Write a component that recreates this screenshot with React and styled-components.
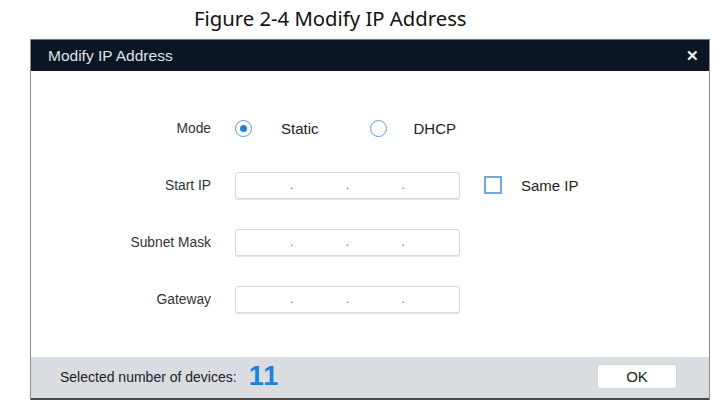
import React from 'react';
import styled, { createGlobalStyle } from 'styled-components';

const GlobalStyle = createGlobalStyle`
  html, body {
    margin: 0;
    padding: 0;
    background: #ffffff;
  }
  body {
    font-family: 'Liberation Sans', Arial, sans-serif;
  }
`;

const Page = styled.div`
  width: 715px;
  height: 401px;
  overflow: hidden;
  background: #ffffff;
`;

const Caption = styled.div`
  height: 39px;
  padding-left: 194px;
  box-sizing: border-box;
  font-family: 'Noto Sans', 'Open Sans', sans-serif;
  font-size: 20.3px;
  line-height: 37px;
  color: #111;
`;

const Dialog = styled.div`
  margin-left: 30px;
  width: 680px;
  border-left: 1px solid #8c8c8c;
  border-right: 1px solid #8c8c8c;
  box-sizing: border-box;
  display: flex;
  flex-direction: column;
`;

const Header = styled.div`
  height: 32px;
  background: #0b1623;
  border-top: 1px solid #6f7780;
  box-sizing: border-box;
  display: flex;
  align-items: center;
  justify-content: space-between;
  padding: 0 10px 0 17px;
  color: #dfe3e8;
  font-size: 15.5px;
`;

const CloseButton = styled.span`
  color: #f4f6f8;
  font-size: 15px;
  font-weight: bold;
  line-height: 1;
`;

const Body = styled.div`
  height: 286px;
  padding-top: 43px;
  box-sizing: border-box;
  display: grid;
  grid-template-columns: 180px auto;
  grid-auto-rows: 28px;
  column-gap: 24px;
  row-gap: 29px;
  align-content: start;
`;

const Label = styled.div`
  display: flex;
  align-items: center;
  justify-content: flex-end;
  font-size: 13.8px;
  color: #333;
`;

const Controls = styled.div`
  display: flex;
  align-items: center;
`;

const Radio = styled.span`
  width: 17px;
  height: 17px;
  border-radius: 50%;
  border: 1.5px solid ${p => (p.checked ? '#4f97dc' : '#5d9fd8')};
  box-sizing: border-box;
  display: flex;
  align-items: center;
  justify-content: center;
  background: #fff;

  &::after {
    content: '';
    display: ${p => (p.checked ? 'block' : 'none')};
    width: 7px;
    height: 7px;
    border-radius: 50%;
    background: #1f7fd6;
  }
`;

const Checkbox = styled.span`
  width: 18px;
  height: 18px;
  border: 2px solid #72a9da;
  box-sizing: border-box;
  background: #fff;
  margin-left: 24px;
`;

const OptionText = styled.span`
  font-size: 15px;
  color: #222;
  margin-left: ${p => p.gap}px;
  margin-right: ${p => p.after || 0}px;
`;

const IpBox = styled.div`
  width: 225px;
  height: 27px;
  border: 1px solid #dadada;
  border-radius: 3px;
  box-shadow: 0 1px 1px rgba(0, 0, 0, 0.12);
  box-sizing: border-box;
  display: flex;
  align-items: flex-end;
  background: #fff;
`;

const Segment = styled.span`
  flex: 1;
`;

const Dot = styled.span`
  width: 0;
  height: 20px;
  display: flex;
  justify-content: center;
  font-size: 12px;
  color: #666;
  overflow: visible;
`;

const Footer = styled.div`
  height: 43px;
  background: #d9dce1;
  border-bottom: 2px solid #4a4a4a;
  box-sizing: border-box;
  display: flex;
  align-items: center;
  padding: 0 32px 2px 29px;
`;

const FooterText = styled.span`
  font-size: 14px;
  color: #222;
`;

const Count = styled.span`
  font-size: 27px;
  font-weight: bold;
  color: #1a84dc;
  margin-left: 12px;
  letter-spacing: 1px;
  line-height: 1;
`;

const OkButton = styled.button`
  margin-left: auto;
  width: 80px;
  height: 25px;
  background: #fff;
  border: 1px solid #d0d3d8;
  border-radius: 3px;
  font-family: 'Liberation Sans', Arial, sans-serif;
  font-size: 15px;
  color: #222;
  padding: 0;
`;

const IpField = () => (
  <IpBox>
    <Segment />
    <Dot>.</Dot>
    <Segment />
    <Dot>.</Dot>
    <Segment />
    <Dot>.</Dot>
    <Segment />
  </IpBox>
);

export default function App() {
  return (
    <Page>
      <GlobalStyle />
      <Caption>Figure 2-4 Modify IP Address</Caption>
      <Dialog>
        <Header>
          <span>Modify IP Address</span>
          <CloseButton>✕</CloseButton>
        </Header>
        <Body>
          <Label>Mode</Label>
          <Controls>
            <Radio checked />
            <OptionText gap={29} after={51}>Static</OptionText>
            <Radio />
            <OptionText gap={27}>DHCP</OptionText>
          </Controls>

          <Label>Start IP</Label>
          <Controls>
            <IpField />
            <Checkbox />
            <OptionText gap={19}>Same IP</OptionText>
          </Controls>

          <Label>Subnet Mask</Label>
          <Controls>
            <IpField />
          </Controls>

          <Label>Gateway</Label>
          <Controls>
            <IpField />
          </Controls>
        </Body>
        <Footer>
          <FooterText>Selected number of devices:</FooterText>
          <Count>11</Count>
          <OkButton>OK</OkButton>
        </Footer>
      </Dialog>
    </Page>
  );
}
